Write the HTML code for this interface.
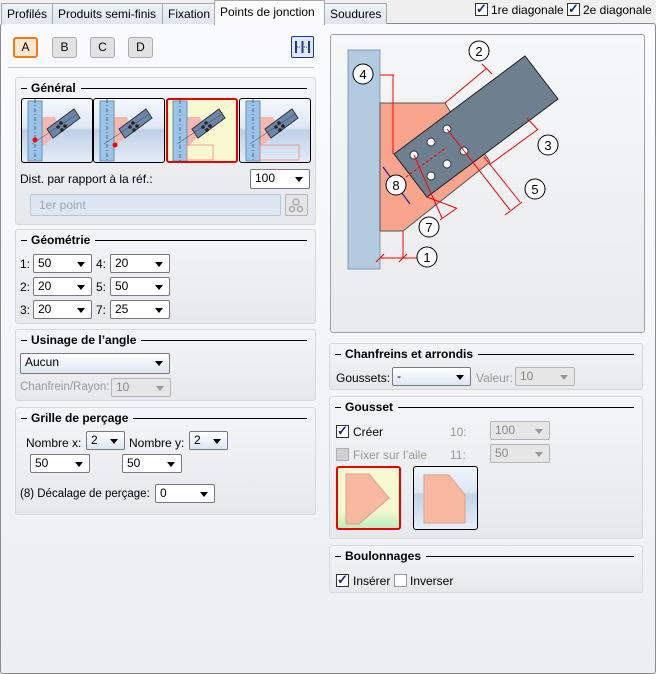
<!DOCTYPE html><html><head><meta charset="utf-8"><style>
*{box-sizing:border-box}body{margin:0;width:656px;height:674px;background:#f0f0f0;font-family:"Liberation Sans",sans-serif;font-size:12px;color:#000;position:relative;overflow:hidden}
.a{position:absolute}
.tab{position:absolute;top:3px;height:21px;border:1px solid #a8a8a8;border-bottom:none;background:linear-gradient(#f0f3fa,#dfe5f2);padding:3px 5px 0;font-size:12px;white-space:nowrap}
.main{position:absolute;left:0;top:23px;width:656px;height:651px;border:1px solid #8c8c8c;border-radius:3px;background:linear-gradient(#fafbfc,#eceef2)}
.grp{position:absolute;background:linear-gradient(#f4f5f7,#e6e8ec);border:1px solid #d6d8dc;border-radius:3px}
.ttl{position:absolute;left:5px;top:3px;right:8px;height:14px;font-weight:bold;font-size:12px;display:flex;align-items:center}
.ttl:before{content:"";width:6px;border-top:1px solid #000;margin-right:4px}
.ttl:after{content:"";flex:1;border-top:1px solid #000;margin-left:5px}
.sel{position:absolute;height:19px;border:1px solid #7a7a7a;background:#fff;padding:1px 4px;font-size:12px;border-radius:2px}
.sel:after{content:"";position:absolute;right:6px;top:7px;border:4px solid transparent;border-top:5px solid #000;border-bottom:none}
.sel.b{background:linear-gradient(#fff,#dde6f3)}
.sel.d{background:#e6e6e6;color:#888;border-color:#b5b5b5}
.sel.d:after{border-top-color:#999}
.btn{position:absolute;top:37px;width:25px;height:21px;border:1px solid #acacac;border-radius:3px;background:#e2e2e2;text-align:center;line-height:19px}
.cb{position:absolute;width:13px;height:13px;border:1px solid #333;background:#fff}
.cb.c:after{content:"✓";position:absolute;left:0;top:-3px;font-size:13px;font-weight:bold;color:#1a2a6c}
.th{position:absolute;top:98px;width:72px;height:65px;border:1px solid #000;border-radius:3px;background:linear-gradient(#f4f8fd 0%,#dfe8f4 45%,#bfd0e6 50%,#e4ecf6 100%);overflow:hidden}
.th svg{position:absolute;left:0;top:0}
</style></head><body>
<div class="main"></div>
<div class="tab" style="left:1px;width:52px">Profilés</div>
<div class="tab" style="left:52px;width:111px">Produits semi-finis</div>
<div class="tab" style="left:162px;width:53px">Fixation</div>
<div class="tab" style="left:214px;top:0;height:25px;width:111px;background:#fbfbfb;padding-top:4px">Points de jonction</div>
<div class="tab" style="left:324px;width:63px">Soudures</div>
<div class="cb c" style="left:475px;top:3px"></div><div class="a" style="left:491px;top:3px">1re diagonale</div>
<div class="cb c" style="left:567px;top:3px"></div><div class="a" style="left:583px;top:3px">2e diagonale</div>

<div class="btn" style="left:13px;border:2px solid #f07a20;background:#fde8cf;line-height:17px">A</div>
<div class="btn" style="left:52px">B</div>
<div class="btn" style="left:90px">C</div>
<div class="btn" style="left:128px">D</div>
<div class="a" style="left:291px;top:36px;width:23px;height:22px;border:1px solid #1e3a8a;background:#dfe8f7;border-radius:2px"><svg width="21" height="20"><path d="M4 4v12M17 4v12M10.5 4v12" stroke="#1e3a8a" stroke-width="2"/><path d="M5 10h4M12 10h4" stroke="#1e3a8a" stroke-width="1" stroke-dasharray="1 1"/></svg></div>
<div class="a" style="left:8px;top:67px;width:306px;border-top:1px solid #c8c8c8"></div>

<div class="grp" style="left:15px;top:77px;width:301px;height:148px"><div class="ttl">Général</div></div>
<div class="th" style="left:21px"><svg width="72" height="65"><path d="M20 18h13l5 14-18 16z" fill="#f4b8b0"/><rect x="6" y="2" width="14" height="60" fill="#9cc3e8" stroke="#6c8fb4"/><path d="M13 0v62" stroke="#345" stroke-dasharray="4 2 1 2" stroke-width=".7"/><path d="M25 30l27-20 6 9-27 20z" fill="#6d87a8" stroke="#334"/><circle cx="36" cy="28" r="1.8" fill="#222"/><circle cx="40" cy="31" r="1.8" fill="#222"/><circle cx="39" cy="24" r="1.8" fill="#222"/><circle cx="43" cy="27" r="1.8" fill="#222"/><path d="M10 45l45-30" stroke="#345" stroke-width=".5"/><circle cx="13" cy="41" r="2.5" fill="red"/></svg></div>
<div class="th" style="left:93px"><svg width="72" height="65"><path d="M20 18h13l5 14-18 16z" fill="#f4b8b0"/><rect x="6" y="2" width="14" height="60" fill="#9cc3e8" stroke="#6c8fb4"/><path d="M13 0v62" stroke="#345" stroke-dasharray="4 2 1 2" stroke-width=".7"/><path d="M25 30l27-20 6 9-27 20z" fill="#6d87a8" stroke="#334"/><circle cx="36" cy="28" r="1.8" fill="#222"/><circle cx="40" cy="31" r="1.8" fill="#222"/><circle cx="39" cy="24" r="1.8" fill="#222"/><circle cx="43" cy="27" r="1.8" fill="#222"/><path d="M10 45l45-30" stroke="#345" stroke-width=".5"/><circle cx="21" cy="46" r="2.5" fill="red"/></svg></div>
<div class="th" style="left:166px;border:2px solid #e00000;background:#f8f8d0"><svg width="68" height="61"><path d="M19 17h13l5 14-18 16z" fill="#f4b8b0"/><rect x="5" y="1" width="14" height="60" fill="#9cc3e8" stroke="#6c8fb4"/><path d="M12 0v62" stroke="#345" stroke-dasharray="4 2 1 2" stroke-width=".7"/><path d="M24 29l27-20 6 9-27 20z" fill="#6d87a8" stroke="#334"/><circle cx="35" cy="27" r="1.8" fill="#222"/><circle cx="39" cy="30" r="1.8" fill="#222"/><circle cx="38" cy="23" r="1.8" fill="#222"/><circle cx="42" cy="26" r="1.8" fill="#222"/><path d="M9 44l45-30" stroke="#345" stroke-width=".5"/><rect x="19" y="45" width="26" height="15" fill="none" stroke="#e88" stroke-width=".8"/></svg></div>
<div class="th" style="left:239px"><svg width="72" height="65"><path d="M20 18h13l5 14-18 16z" fill="#f4b8b0"/><rect x="6" y="2" width="14" height="60" fill="#9cc3e8" stroke="#6c8fb4"/><path d="M13 0v62" stroke="#345" stroke-dasharray="4 2 1 2" stroke-width=".7"/><path d="M25 30l27-20 6 9-27 20z" fill="#6d87a8" stroke="#334"/><circle cx="36" cy="28" r="1.8" fill="#222"/><circle cx="40" cy="31" r="1.8" fill="#222"/><circle cx="39" cy="24" r="1.8" fill="#222"/><circle cx="43" cy="27" r="1.8" fill="#222"/><path d="M10 45l45-30" stroke="#345" stroke-width=".5"/><rect x="20" y="46" width="39" height="15" fill="none" stroke="#e88" stroke-width=".8"/></svg></div>
<div class="a" style="left:20px;top:172px">Dist. par rapport à la réf.:</div>
<div class="sel" style="left:250px;top:169px;width:60px;height:20px">100</div>
<div class="a" style="left:30px;top:194px;width:251px;height:22px;border:1px solid #b9c6d8;background:#dde6f2;color:#9aa8bb;padding:3px 8px;border-radius:2px">1er point</div>
<div class="a" style="left:285px;top:194px;width:23px;height:22px;border:1px solid #b5b5b5;background:#e6e6e6;border-radius:2px"><svg width="21" height="20"><g fill="none" stroke="#aaa" stroke-width="1.5"><circle cx="10" cy="7" r="3"/><circle cx="6" cy="14" r="2.5"/><circle cx="14" cy="14" r="2.5"/></g></svg></div>

<div class="grp" style="left:15px;top:229px;width:301px;height:95px"><div class="ttl">Géométrie</div></div>
<div class="a" style="left:20px;top:257px">1:</div><div class="sel" style="left:33px;top:254px;width:59px">50</div>
<div class="a" style="left:96px;top:257px">4:</div><div class="sel" style="left:110px;top:254px;width:60px">20</div>
<div class="a" style="left:20px;top:280px">2:</div><div class="sel" style="left:33px;top:277px;width:59px">20</div>
<div class="a" style="left:96px;top:280px">5:</div><div class="sel" style="left:110px;top:277px;width:60px">50</div>
<div class="a" style="left:20px;top:303px">3:</div><div class="sel" style="left:33px;top:300px;width:59px">20</div>
<div class="a" style="left:96px;top:303px">7:</div><div class="sel" style="left:110px;top:300px;width:60px">25</div>

<div class="grp" style="left:15px;top:329px;width:301px;height:72px"><div class="ttl">Usinage de l’angle</div></div>
<div class="sel b" style="left:20px;top:353px;width:150px;height:21px">Aucun</div>
<div class="a" style="left:20px;top:381px;color:#999;font-size:11.5px">Chanfrein/Rayon:</div>
<div class="sel d" style="left:111px;top:378px;width:60px">10</div>

<div class="grp" style="left:15px;top:407px;width:301px;height:108px"><div class="ttl">Grille de perçage</div></div>
<div class="a" style="left:26px;top:436px">Nombre x:</div><div class="sel b" style="left:86px;top:431px;width:39px">2</div>
<div class="a" style="left:129px;top:436px">Nombre y:</div><div class="sel b" style="left:189px;top:431px;width:39px">2</div>
<div class="sel" style="left:30px;top:454px;width:60px">50</div>
<div class="sel" style="left:122px;top:454px;width:60px">50</div>
<div class="a" style="left:20px;top:488px;font-size:11.5px">(8) Décalage de perçage:</div><div class="sel" style="left:155px;top:484px;width:60px">0</div>

<div class="a" style="left:330px;top:34px;width:315px;height:299px;border:1px solid #a0a0a0;border-radius:3px;background:linear-gradient(#f6f7f8,#e9ebee)"></div>
<svg class="a" style="left:0;top:0" width="656" height="340">
<rect x="348" y="50" width="32" height="219" fill="#b3cbe1" stroke="#8a9aaa"/>
<path d="M380 103h65l6 10 36 44 3 5-87 69h-23z" fill="#f9a58e" stroke="#555"/>
<path d="M394 154l131-98 33 43-131 98z" fill="#6e7f8f" stroke="#222"/>
<g fill="#fff" stroke="#333"><circle cx="447" cy="129" r="4"/><circle cx="431" cy="142" r="4"/><circle cx="414" cy="155" r="4"/><circle cx="464" cy="151" r="4"/><circle cx="447" cy="164" r="4"/><circle cx="431" cy="176" r="4"/></g>
<g stroke="#f00" stroke-width="1" fill="none">
<path d="M380 75h14M393 75v79"/>
<path d="M445 103l42-35M482 64l10 10"/>
<path d="M489 165l48-35M527 118l11 12"/>
<path d="M447 129l63 81M484 157l36 45M505 215l17-13"/>
<path d="M414 155l28 63M427 197l29 11M440 220l17-12"/>
<path d="M403 231v27M380 258h37M376 262l8-8M399 262l8-8"/>
<path d="M406 177l41-30" stroke-dasharray="3 2"/>
</g>
<path d="M383 167l27 37" stroke="#22228a" stroke-width="1.2"/>
<g font-size="13" text-anchor="middle" font-family="Liberation Sans"><g fill="#fff" stroke="#000">
<circle cx="363" cy="74" r="10"/><circle cx="479" cy="51" r="10"/><circle cx="548" cy="145" r="10"/><circle cx="535" cy="189" r="10"/><circle cx="396" cy="185" r="10"/><circle cx="429" cy="227" r="10"/><circle cx="427" cy="257" r="10"/></g>
<text x="363" y="79">4</text><text x="479" y="56">2</text><text x="548" y="150">3</text><text x="535" y="194">5</text><text x="396" y="190">8</text><text x="429" y="232">7</text><text x="427" y="262">1</text></g>
</svg>

<div class="grp" style="left:329px;top:343px;width:314px;height:47px"><div class="ttl">Chanfreins et arrondis</div></div>
<div class="a" style="left:336px;top:371px">Goussets:</div><div class="sel b" style="left:392px;top:367px;width:79px">-</div>
<div class="a" style="left:476px;top:371px;color:#999">Valeur:</div><div class="sel d" style="left:515px;top:367px;width:60px">10</div>

<div class="grp" style="left:329px;top:396px;width:314px;height:143px"><div class="ttl">Gousset</div></div>
<div class="cb c" style="left:336px;top:425px"></div><div class="a" style="left:353px;top:425px">Créer</div>
<div class="a" style="left:450px;top:425px;color:#999">10:</div><div class="sel d" style="left:490px;top:421px;width:60px">100</div>
<div class="cb" style="left:336px;top:448px;background:#d0d0d0;border-color:#b0b0b0"></div><div class="a" style="left:353px;top:448px;color:#999">Fixer sur l’aile</div>
<div class="a" style="left:450px;top:448px;color:#999">11:</div><div class="sel d" style="left:490px;top:444px;width:60px">50</div>
<div class="a" style="left:336px;top:466px;width:65px;height:64px;border:2px solid #e00;border-radius:3px;background:linear-gradient(#f8f8d0 70%,#b8f0c0)"><svg width="61" height="60"><path d="M8 6h23l20 24-30 26H8z" fill="#f9b9a0" stroke="#d9a090"/></svg></div>
<div class="a" style="left:413px;top:466px;width:65px;height:64px;border:1px solid #000;border-radius:3px;background:linear-gradient(#eef4fb,#dde7f3 40%,#c3d3e7 45%,#e6eef7)"><svg width="63" height="62"><path d="M10 8h25l16 20v28H10z" fill="#f9b9a0" stroke="#d9a090"/></svg></div>

<div class="grp" style="left:329px;top:545px;width:314px;height:48px"><div class="ttl">Boulonnages</div></div>
<div class="cb c" style="left:336px;top:574px"></div><div class="a" style="left:353px;top:574px">Insérer</div>
<div class="cb" style="left:394px;top:574px;border-color:#999"></div><div class="a" style="left:410px;top:574px">Inverser</div>
</body></html>
